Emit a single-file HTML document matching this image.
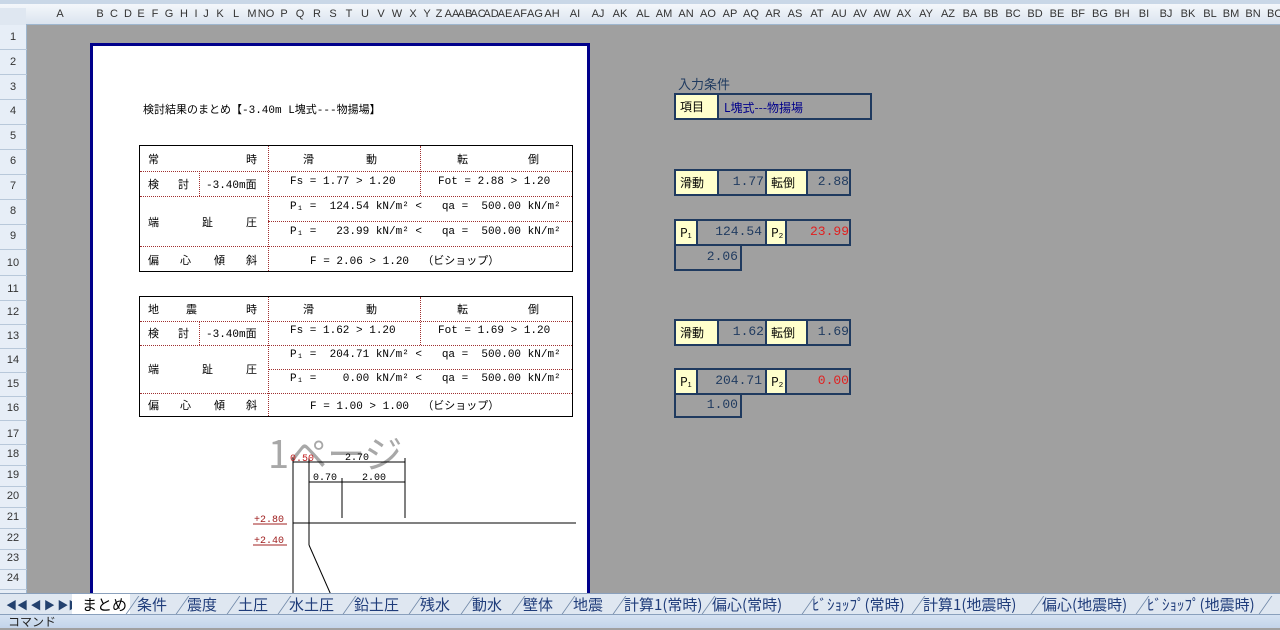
<!DOCTYPE html>
<html><head><meta charset="utf-8"><style>
*{margin:0;padding:0;box-sizing:border-box}
body{width:1280px;height:628px;overflow:hidden;background:#a0a0a0;position:relative;font-family:"Liberation Sans","Noto Sans CJK JP",sans-serif;}
.a{position:absolute;white-space:nowrap}
#ch{position:absolute;left:0;top:0;width:1280px;height:25px;background:linear-gradient(#f4f7fb,#dbe4ef);border-bottom:1px solid #9eb6ce;border-top:4px solid #c9d7e7}
#ch span{position:absolute;top:4px;font-size:11px;color:#333;transform:translateX(-50%)}
#rh{position:absolute;left:0;top:25px;width:27px;height:568px;background:#e7eef7;border-right:1px solid #9eb6ce}
#rh span{position:absolute;left:0;width:26px;text-align:center;font-size:11px;color:#333}
.sep{position:absolute;left:0;width:27px;height:1px;background:#b8c8da}
#page{position:absolute;left:90px;top:43px;width:500px;height:560px;background:#fff;border:3px solid #00008b;border-bottom:none}
.t{position:absolute;border:1px solid #000;background:#fff}
.t .c{position:absolute;font-size:11px;color:#000;font-family:"Liberation Mono","Noto Sans CJK JP",monospace;white-space:pre}
.hl{position:absolute;height:0;border-top:1px dotted #a03030}
.vl{position:absolute;width:0;border-left:1px dotted #a03030}
.bx{position:absolute;border:2px solid #1f3a5f;background:#a0a0a0}
.y{position:absolute;top:0;bottom:0;background:#ffffcc;border-right:2px solid #1f3a5f;font-size:12px;color:#000;padding:3px 0 0 4px;font-family:"Noto Sans CJK JP",sans-serif}
.v{position:absolute;top:3px;font-size:13px;font-family:"Liberation Mono",monospace;color:#1f3a5f;text-align:right}
#tabs{position:absolute;left:0;top:593px;width:1280px;height:21px;background:#dfe7f1;border-top:1px solid #8aa0bc}
#tabs span{position:absolute;top:0;font-size:15px;color:#1f3c7a;font-family:"Noto Sans CJK JP",sans-serif}
#tabs i{position:absolute;top:2px;width:1px;height:18px;background:#7088a8;transform:skewX(-35deg)}
#st{position:absolute;left:0;top:614px;width:1280px;height:14px;background:linear-gradient(#d5e2f2,#c3d4ea);border-top:1px solid #8aa0bc}
</style></head><body>
<div id="ch">
<span style="left:13px;width:26px;height:20px;background:#dfe7f1"></span>
<span style="left:60px">A</span><span style="left:100px">B</span><span style="left:114px">C</span><span style="left:128px">D</span><span style="left:141px">E</span><span style="left:155px">F</span><span style="left:169px">G</span><span style="left:184px">H</span><span style="left:196px">I</span><span style="left:206px">J</span><span style="left:220px">K</span><span style="left:236px">L</span><span style="left:252px">M</span><span style="left:266px">NO</span><span style="left:284px">P</span><span style="left:300px">Q</span><span style="left:317px">R</span><span style="left:333px">S</span><span style="left:349px">T</span><span style="left:365px">U</span><span style="left:381px">V</span><span style="left:397px">W</span><span style="left:413px">X</span><span style="left:427px">Y</span><span style="left:439px">Z</span><span style="left:452px">AA</span><span style="left:465px">AB</span><span style="left:478px">AC</span><span style="left:491px">AD</span><span style="left:505px">AE</span><span style="left:520px">AF</span><span style="left:535px">AG</span><span style="left:552px">AH</span><span style="left:575px">AI</span><span style="left:598px">AJ</span><span style="left:620px">AK</span><span style="left:643px">AL</span><span style="left:664px">AM</span><span style="left:686px">AN</span><span style="left:708px">AO</span><span style="left:730px">AP</span><span style="left:751px">AQ</span><span style="left:773px">AR</span><span style="left:795px">AS</span><span style="left:817px">AT</span><span style="left:839px">AU</span><span style="left:860px">AV</span><span style="left:882px">AW</span><span style="left:904px">AX</span><span style="left:926px">AY</span><span style="left:948px">AZ</span><span style="left:970px">BA</span><span style="left:991px">BB</span><span style="left:1013px">BC</span><span style="left:1035px">BD</span><span style="left:1057px">BE</span><span style="left:1078px">BF</span><span style="left:1100px">BG</span><span style="left:1122px">BH</span><span style="left:1144px">BI</span><span style="left:1166px">BJ</span><span style="left:1188px">BK</span><span style="left:1210px">BL</span><span style="left:1231px">BM</span><span style="left:1253px">BN</span><span style="left:1275px">BO</span>
</div>
<div id="rh">
<span style="top:6px">1</span><span style="top:31px">2</span><span style="top:56px">3</span><span style="top:80px">4</span><span style="top:105px">5</span><span style="top:130px">6</span><span style="top:155px">7</span><span style="top:180px">8</span><span style="top:205px">9</span><span style="top:232px">10</span><span style="top:258px">11</span><span style="top:281px">12</span><span style="top:305px">13</span><span style="top:329px">14</span><span style="top:353px">15</span><span style="top:377px">16</span><span style="top:403px">17</span><span style="top:423px">18</span><span style="top:444px">19</span><span style="top:465px">20</span><span style="top:486px">21</span><span style="top:507px">22</span><span style="top:527px">23</span><span style="top:547px">24</span>
<div class="sep" style="top:24px"></div><div class="sep" style="top:49px"></div><div class="sep" style="top:74px"></div><div class="sep" style="top:99px"></div><div class="sep" style="top:124px"></div><div class="sep" style="top:149px"></div><div class="sep" style="top:174px"></div><div class="sep" style="top:199px"></div><div class="sep" style="top:224px"></div><div class="sep" style="top:250px"></div><div class="sep" style="top:275px"></div><div class="sep" style="top:299px"></div><div class="sep" style="top:323px"></div><div class="sep" style="top:347px"></div><div class="sep" style="top:371px"></div><div class="sep" style="top:395px"></div><div class="sep" style="top:419px"></div><div class="sep" style="top:440px"></div><div class="sep" style="top:461px"></div><div class="sep" style="top:482px"></div><div class="sep" style="top:503px"></div><div class="sep" style="top:524px"></div><div class="sep" style="top:544px"></div><div class="sep" style="top:564px"></div>
</div>
<div id="page"></div>
<div class="a" style="left:143px;top:101px;font-size:11px;font-family:'Liberation Mono','Noto Sans CJK JP',monospace">検討結果のまとめ【-3.40m L塊式---物揚場】</div>

<!-- table 1 -->
<div class="t" style="left:139px;top:145px;width:434px;height:127px">
<div class="hl" style="left:0;right:0;top:25px"></div><div class="hl" style="left:0;right:0;top:50px"></div><div class="hl" style="left:128px;right:0;top:75px"></div><div class="hl" style="left:0;right:0;top:100px"></div>
<div class="vl" style="left:128px;top:0;bottom:0"></div><div class="vl" style="left:280px;top:0;height:50px"></div><div class="vl" style="left:59px;top:25px;height:25px"></div>
<div class="c" style="left:8px;top:5px">常</div><div class="c" style="left:106px;top:5px">時</div>
<div class="c" style="left:163px;top:5px">滑</div><div class="c" style="left:226px;top:5px">動</div>
<div class="c" style="left:317px;top:5px">転</div><div class="c" style="left:388px;top:5px">倒</div>
<div class="c" style="left:8px;top:30px">検</div><div class="c" style="left:38px;top:30px">討</div><div class="c" style="left:66px;top:30px">-3.40m面</div>
<div class="c" style="left:150px;top:30px">Fs = 1.77 &gt; 1.20</div><div class="c" style="left:298px;top:30px">Fot = 2.88 &gt; 1.20</div>
<div class="c" style="left:8px;top:68px">端</div><div class="c" style="left:62px;top:68px">趾</div><div class="c" style="left:106px;top:68px">圧</div>
<div class="c" style="left:150px;top:55px">P₁ =  124.54 kN/m² &lt;   qa =  500.00 kN/m²</div>
<div class="c" style="left:150px;top:80px">P₁ =   23.99 kN/m² &lt;   qa =  500.00 kN/m²</div>
<div class="c" style="left:8px;top:106px">偏</div><div class="c" style="left:40px;top:106px">心</div><div class="c" style="left:74px;top:106px">傾</div><div class="c" style="left:106px;top:106px">斜</div>
<div class="c" style="left:170px;top:106px">F = 2.06 &gt; 1.20  （ビショップ）</div>
</div>
<!-- table 2 -->
<div class="t" style="left:139px;top:296px;width:434px;height:121px">
<div class="hl" style="left:0;right:0;top:24px"></div><div class="hl" style="left:0;right:0;top:48px"></div><div class="hl" style="left:128px;right:0;top:72px"></div><div class="hl" style="left:0;right:0;top:96px"></div>
<div class="vl" style="left:128px;top:0;bottom:0"></div><div class="vl" style="left:280px;top:0;height:48px"></div><div class="vl" style="left:59px;top:24px;height:24px"></div>
<div class="c" style="left:8px;top:4px">地</div><div class="c" style="left:46px;top:4px">震</div><div class="c" style="left:106px;top:4px">時</div>
<div class="c" style="left:163px;top:4px">滑</div><div class="c" style="left:226px;top:4px">動</div>
<div class="c" style="left:317px;top:4px">転</div><div class="c" style="left:388px;top:4px">倒</div>
<div class="c" style="left:8px;top:28px">検</div><div class="c" style="left:38px;top:28px">討</div><div class="c" style="left:66px;top:28px">-3.40m面</div>
<div class="c" style="left:150px;top:28px">Fs = 1.62 &gt; 1.20</div><div class="c" style="left:298px;top:28px">Fot = 1.69 &gt; 1.20</div>
<div class="c" style="left:8px;top:64px">端</div><div class="c" style="left:62px;top:64px">趾</div><div class="c" style="left:106px;top:64px">圧</div>
<div class="c" style="left:150px;top:52px">P₁ =  204.71 kN/m² &lt;   qa =  500.00 kN/m²</div>
<div class="c" style="left:150px;top:76px">P₁ =    0.00 kN/m² &lt;   qa =  500.00 kN/m²</div>
<div class="c" style="left:8px;top:100px">偏</div><div class="c" style="left:40px;top:100px">心</div><div class="c" style="left:74px;top:100px">傾</div><div class="c" style="left:106px;top:100px">斜</div>
<div class="c" style="left:170px;top:100px">F = 1.00 &gt; 1.00  （ビショップ）</div>
</div>

<!-- drawing -->
<div class="a" style="left:268px;top:424px;font-size:38px;color:#a8a8a8;font-family:'Noto Sans CJK JP',sans-serif">1ページ</div>
<svg class="a" style="left:240px;top:445px" width="345" height="150" viewBox="240 445 345 150">
<g stroke="#000" stroke-width="1" fill="none">
<line x1="293" y1="458" x2="293" y2="595"/><line x1="309" y1="458" x2="309" y2="545"/><line x1="309" y1="545" x2="331" y2="595"/>
<line x1="293" y1="523" x2="576" y2="523"/><line x1="293" y1="462" x2="405" y2="462"/><line x1="309" y1="482" x2="405" y2="482"/>
<line x1="405" y1="458" x2="405" y2="518"/><line x1="342" y1="478" x2="342" y2="518"/>
<line x1="253" y1="524" x2="287" y2="524" stroke="#a02020"/><line x1="253" y1="545" x2="287" y2="545" stroke="#a02020"/>
</g>
<g font-family="Liberation Mono,monospace" font-size="10">
<text x="290" y="461" fill="#c02020">0.50</text><text x="345" y="460">2.70</text><text x="313" y="480">0.70</text><text x="362" y="480">2.00</text>
<text x="254" y="522" fill="#a02020">+2.80</text><text x="254" y="543" fill="#a02020">+2.40</text>
</g></svg>

<!-- right panel -->
<div class="a" style="left:678px;top:74px;font-size:13px;color:#1f3a5f;font-family:'Noto Sans CJK JP',sans-serif">入力条件</div>
<div class="bx" style="left:674px;top:93px;width:198px;height:27px"><div class="y" style="left:0;width:43px">項目</div><div class="a" style="left:48px;top:4px;font-size:12px;color:#00008b;font-family:'Noto Sans CJK JP',sans-serif">L塊式---物揚場</div></div>

<div class="bx" style="left:674px;top:169px;width:177px;height:27px"><div class="y" style="left:0;width:43px">滑動</div><div class="v" style="left:45px;width:43px">1.77</div><div class="y" style="left:89px;width:43px;border-left:2px solid #1f3a5f">転倒</div><div class="v" style="left:132px;width:41px">2.88</div></div>
<div class="bx" style="left:674px;top:219px;width:177px;height:27px"><div class="y" style="left:0;width:22px">P₁</div><div class="v" style="left:24px;width:62px">124.54</div><div class="y" style="left:89px;width:22px;border-left:2px solid #1f3a5f">P₂</div><div class="v" style="left:111px;width:62px;color:#e02020">23.99</div></div>
<div class="bx" style="left:674px;top:244px;width:68px;height:27px"><div class="v" style="left:0;width:62px">2.06</div></div>

<div class="bx" style="left:674px;top:319px;width:177px;height:27px"><div class="y" style="left:0;width:43px">滑動</div><div class="v" style="left:45px;width:43px">1.62</div><div class="y" style="left:89px;width:43px;border-left:2px solid #1f3a5f">転倒</div><div class="v" style="left:132px;width:41px">1.69</div></div>
<div class="bx" style="left:674px;top:368px;width:177px;height:27px"><div class="y" style="left:0;width:22px">P₁</div><div class="v" style="left:24px;width:62px">204.71</div><div class="y" style="left:89px;width:22px;border-left:2px solid #1f3a5f">P₂</div><div class="v" style="left:111px;width:62px;color:#e02020">0.00</div></div>
<div class="bx" style="left:674px;top:393px;width:68px;height:25px"><div class="v" style="left:0;top:2px;width:62px">1.00</div></div>

<div id="tabs">
<span style="left:6px;font-size:11px;top:3px;color:#23416e">◀◀ ◀ ▶ ▶▶</span>
<span style="left:72px;width:58px;height:20px;background:#fff;top:0"></span>
<span style="left:82px;color:#000">まとめ</span><i style="left:132px"></i><span style="left:137px">条件</span><i style="left:182px"></i><span style="left:187px">震度</span><i style="left:233px"></i><span style="left:238px">土圧</span><i style="left:284px"></i><span style="left:289px">水土圧</span><i style="left:349px"></i><span style="left:354px">鉛土圧</span><i style="left:415px"></i><span style="left:420px">残水</span><i style="left:467px"></i><span style="left:472px">動水</span><i style="left:518px"></i><span style="left:523px">壁体</span><i style="left:568px"></i><span style="left:573px">地震</span><i style="left:619px"></i><span style="left:624px">計算1(常時)</span><i style="left:708px"></i><span style="left:712px">偏心(常時)</span><i style="left:808px"></i><span style="left:812px">ﾋﾞｼｮｯﾌﾟ(常時)</span><i style="left:918px"></i><span style="left:923px">計算1(地震時)</span><i style="left:1037px"></i><span style="left:1042px">偏心(地震時)</span><i style="left:1142px"></i><span style="left:1147px">ﾋﾞｼｮｯﾌﾟ(地震時)</span><i style="left:1265px"></i>
</div>
<div id="st"><span class="a" style="left:8px;top:0;font-size:12px;color:#222;font-family:'Noto Sans CJK JP',sans-serif;line-height:13px">コマンド</span></div>
</body></html>
